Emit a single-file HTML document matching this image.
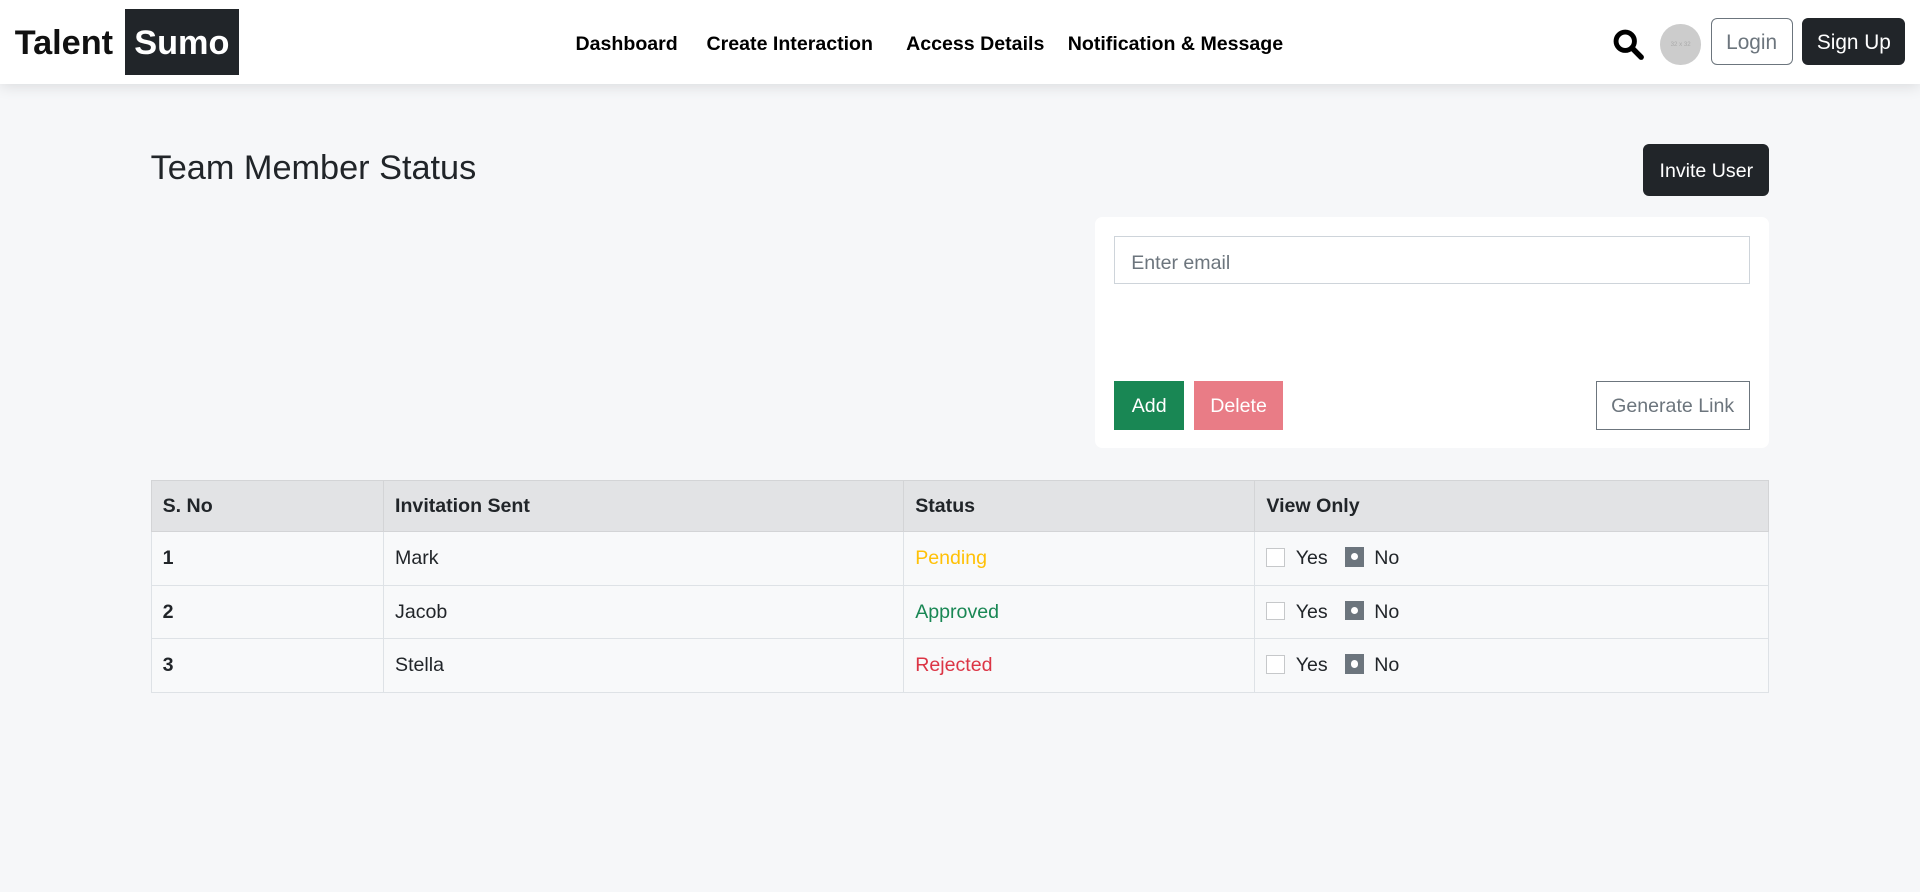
<!DOCTYPE html>
<html><head><meta charset="utf-8"><style>
html,body{margin:0;padding:0;background:#f6f7f9;overflow:hidden}
#w{zoom:1.22449;width:1568px;height:728px;position:relative;font-family:"Liberation Sans",sans-serif;color:#212529;background:#f6f7f9}
.a{position:absolute}
nav{position:absolute;left:0;top:0;width:1568px;height:69px;background:#fff;box-shadow:0 2px 12px rgba(0,0,0,.12)}
.lk{position:absolute;top:27px;font-size:16px;font-weight:bold;color:#000;white-space:nowrap}
.btn{position:absolute;box-sizing:border-box;display:flex;align-items:center;justify-content:center;font-size:16px;padding-top:2px}
table{position:absolute;left:123px;top:392px;width:1322px;border-collapse:collapse;font-size:16px}
td,th{border:1px solid #dee2e6;padding:0 9px;text-align:left;background:#f8f9fa}
th{background:#e2e3e5;border-color:#d3d4d6;height:41px}
td{height:43px}
.cb{display:inline-block;width:15px;height:15px;border:1px solid #c6c8ca;background:#fff;vertical-align:-2px;box-sizing:border-box;margin-right:9px}
.rd{display:inline-block;width:16px;height:16px;background:#6c757d;vertical-align:-2px;position:relative;margin:0 8px 0 14px}
.rd:after{content:"";position:absolute;left:5px;top:5px;width:6px;height:6px;border-radius:50%;background:#fff}
</style></head><body><div id="w">
<nav>
<div class="a" style="left:12px;top:20px;font-size:28px;font-weight:bold;color:#111">Talent</div>
<div class="a" style="left:102px;top:7px;width:93px;height:54px;background:#212529;color:#fff;font-size:28px;font-weight:bold;display:flex;align-items:center;justify-content:center;padding-top:3px;box-sizing:border-box">Sumo</div>
<div class="lk" style="left:470px">Dashboard</div>
<div class="lk" style="left:577px">Create Interaction</div>
<div class="lk" style="left:740px">Access Details</div>
<div class="lk" style="left:872px">Notification &amp; Message</div>
<svg class="a" style="left:1317px;top:24px" width="26" height="25" viewBox="0 0 26 25"><circle cx="10" cy="10" r="7.5" fill="none" stroke="#000" stroke-width="4"/><line x1="15.5" y1="15.5" x2="23" y2="23" stroke="#000" stroke-width="4.5" stroke-linecap="round"/></svg>
<div class="a" style="left:1356px;top:20px;width:33px;height:33px;border-radius:50%;background:#ccc;color:#aaa;font-size:5px;display:flex;align-items:center;justify-content:center">32 x 32</div>
<div class="btn" style="left:1397px;top:15px;width:67px;height:38px;border:1px solid #6c757d;border-radius:5px;color:#6c757d;font-size:17px">Login</div>
<div class="btn" style="left:1472px;top:15px;width:84px;height:38px;background:#212529;border-radius:5px;color:#fff;font-size:17px">Sign Up</div>
</nav>
<div class="a" style="left:123px;top:122px;font-size:28px">Team Member Status</div>
<div class="btn" style="left:1342px;top:118px;width:103px;height:42px;background:#212529;border-radius:5px;color:#fff">Invite User</div>
<div class="a" style="left:894px;top:177px;width:551px;height:189px;background:#fff;border-radius:6px"></div>
<div class="a" style="left:910px;top:193px;width:519px;height:39px;box-sizing:border-box;border:1px solid #ced4da;color:#6c757d;font-size:16px;padding:12px 13px 0">Enter email</div>
<div class="btn" style="left:910px;top:311px;width:57px;height:40px;background:#198754;color:#fff">Add</div>
<div class="btn" style="left:975px;top:311px;width:73px;height:40px;background:#e97c86;color:#fff">Delete</div>
<div class="btn" style="left:1303px;top:311px;width:126px;height:40px;border:1px solid #6c757d;color:#6c757d">Generate Link</div>
<table>
<tr><th style="width:171px">S. No</th><th style="width:406px">Invitation Sent</th><th style="width:268px">Status</th><th>View Only</th></tr>
<tr><td><b>1</b></td><td>Mark</td><td style="color:#ffc107">Pending</td><td><span class="cb"></span>Yes<span class="rd"></span>No</td></tr>
<tr><td><b>2</b></td><td>Jacob</td><td style="color:#198754">Approved</td><td><span class="cb"></span>Yes<span class="rd"></span>No</td></tr>
<tr><td><b>3</b></td><td>Stella</td><td style="color:#dc3545">Rejected</td><td><span class="cb"></span>Yes<span class="rd"></span>No</td></tr>
</table>
</div></body></html>
